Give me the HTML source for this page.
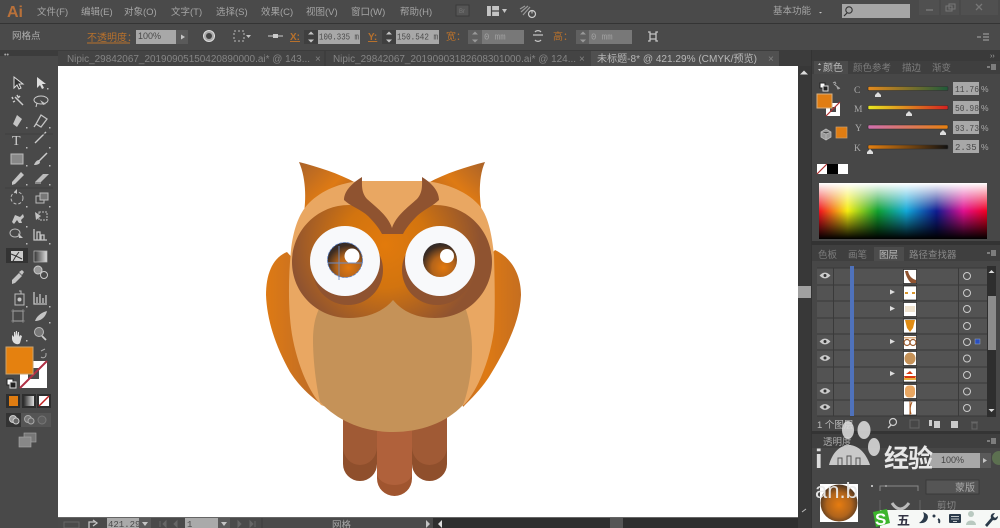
<!DOCTYPE html>
<html><head><meta charset="utf-8"><style>
html,body{margin:0;padding:0;background:#4a4a4a}
#w{position:relative;width:1000px;height:528px;overflow:hidden}
svg{position:absolute;left:0;top:0;filter:blur(.35px)}
text{font-family:"Liberation Sans","Noto Sans CJK SC",sans-serif;font-size:10px;fill:#a8a8a8}
.m{font-size:9.5px;fill:#a5a5a5}
.t{font-size:10px;fill:#858585}
.o{font-size:10px;fill:#b8712c}
.v{font-family:"Liberation Mono","Noto Sans CJK SC",monospace;font-size:9px;fill:#4a4a4a}
.ic{fill:none;stroke:#c4c4c4;stroke-width:1.3}
.f{fill:#c4c4c4}
#sp{position:absolute;left:819px;top:183px;width:168px;height:56px;background:linear-gradient(#fff,rgba(255,255,255,0) 50%,rgba(0,0,0,0) 50%,#000),linear-gradient(90deg,#f01020 0,#f5ee10 17%,#10a030 35%,#12a8d8 52%,#101c90 70%,#e01090 86%,#f00020 100%)}
</style></head><body><div id="w">
<svg width="1000" height="528" viewBox="0 0 1000 528">
<defs>
<linearGradient id="earL" x1="0" y1="0" x2="1" y2="1"><stop offset="0" stop-color="#a9622a"/><stop offset=".5" stop-color="#de7a14"/><stop offset="1" stop-color="#96562a"/></linearGradient>
<linearGradient id="earR" x1="1" y1="0" x2="0" y2="1"><stop offset="0" stop-color="#a9622a"/><stop offset=".45" stop-color="#de7a14"/><stop offset="1" stop-color="#a86028"/></linearGradient>
<linearGradient id="wL" x1="0" y1="0" x2="1" y2="0"><stop offset="0" stop-color="#de7a14"/><stop offset="1" stop-color="#b5682c"/></linearGradient>
<linearGradient id="wR" x1="1" y1="0" x2="0" y2="0"><stop offset="0" stop-color="#c56e20"/><stop offset=".5" stop-color="#de7a14"/><stop offset="1" stop-color="#b5682c"/></linearGradient>
<radialGradient id="mask" gradientUnits="userSpaceOnUse" cx="385" cy="245" r="95"><stop offset="0" stop-color="#e27a0c"/><stop offset=".45" stop-color="#d2740f"/><stop offset="1" stop-color="#8f5330"/></radialGradient>
<radialGradient id="pup" cx=".6" cy=".72" r=".75"><stop offset="0" stop-color="#e2780d"/><stop offset=".45" stop-color="#b4641a"/><stop offset=".85" stop-color="#3d2c22"/><stop offset="1" stop-color="#2f2a2a"/></radialGradient>
<radialGradient id="ball" cx=".5" cy=".55" r=".55"><stop offset="0" stop-color="#e67c10"/><stop offset=".6" stop-color="#b0641c"/><stop offset="1" stop-color="#4c3420"/></radialGradient>
<linearGradient id="sC" x1="0" x2="1"><stop offset="0" stop-color="#e58a1c"/><stop offset="1" stop-color="#1f5a3a"/></linearGradient>
<linearGradient id="sM" x1="0" x2="1"><stop offset="0" stop-color="#e8e820"/><stop offset="1" stop-color="#d42020"/></linearGradient>
<linearGradient id="sY" x1="0" x2="1"><stop offset="0" stop-color="#d070b0"/><stop offset="1" stop-color="#e58010"/></linearGradient>
<linearGradient id="sK" x1="0" x2="1"><stop offset="0" stop-color="#e58010"/><stop offset="1" stop-color="#111"/></linearGradient>
<linearGradient id="grd" x1="0" x2="1"><stop offset="0" stop-color="#333"/><stop offset="1" stop-color="#ddd"/></linearGradient>
</defs>

<!-- base -->
<rect width="1000" height="528" fill="#4a4a4a"/>
<rect y="23" width="1000" height="1" fill="#343434"/>
<rect y="50" width="1000" height="16" fill="#3c3c3c"/>
<rect y="56" width="58" height="472" fill="#494949"/>
<text x="4" y="57" style="font-size:7px">••</text>

<!-- menu -->
<text x="7" y="17" style="font-size:16px;font-weight:bold;fill:#b9713a">Ai</text>
<text class="m" x="37" y="15">文件(F)</text>
<text class="m" x="81" y="15">编辑(E)</text>
<text class="m" x="124" y="15">对象(O)</text>
<text class="m" x="171" y="15">文字(T)</text>
<text class="m" x="216" y="15">选择(S)</text>
<text class="m" x="261" y="15">效果(C)</text>
<text class="m" x="306" y="15">视图(V)</text>
<text class="m" x="351" y="15">窗口(W)</text>
<text class="m" x="400" y="15">帮助(H)</text>
<rect x="456" y="5" width="13" height="11" fill="#555" stroke="#3a3a3a"/>
<text x="459" y="13" style="font-size:6px;fill:#777">Br</text>
<rect x="487" y="6" width="12" height="10" fill="#c4c4c4"/><path d="M491.5 6v10M491.5 11H499" stroke="#444" stroke-width="1.2"/>
<path d="M502 9h5l-2.500 4z" class="f"/>
<path d="M521 12l7-6M523 15l7-8M520 9l5-3" stroke="#999" stroke-width="1.200" fill="none"/>
<circle cx="532" cy="14" r="3.500" fill="none" stroke="#ccc" stroke-width="1.200"/><path d="M532 10.500v3" stroke="#ccc"/>
<text class="m" x="773" y="14">基本功能</text>
<path d="M819 12h3l-1.500 1.500z" class="f"/>
<rect x="842" y="4" width="68" height="14" fill="#a6a6a6"/>
<circle cx="849" cy="10" r="3.200" fill="none" stroke="#333" stroke-width="1.100"/><path d="M847 13l-3 3" stroke="#333" stroke-width="1.200"/>
<rect x="919" y="0" width="79" height="15" fill="#505050"/>
<path d="M926 10h7" stroke="#777" stroke-width="1.500"/>
<rect x="946" y="6" width="6" height="5" fill="none" stroke="#777"/><rect x="949" y="4" width="6" height="5" fill="none" stroke="#777"/>
<path d="M976 4l6 6M982 4l-6 6" stroke="#777" stroke-width="1.300"/>
<path d="M940 0v15M960 0v15" stroke="#444"/>

<!-- control bar -->
<text x="12" y="39" style="font-size:9.500px;fill:#b0b0b0">网格点</text>
<text class="o" x="87" y="41">不透明度：</text>
<path d="M87 43h43" stroke="#b8712c"/>
<rect x="136" y="30" width="40" height="14" fill="#a8a8a8"/>
<text class="v" x="138" y="39" style="font-family:'Liberation Sans',sans-serif">100%</text>
<rect x="176" y="30" width="12" height="14" fill="#5a5a5a"/><path d="M181 34.500l4 2.500-4 2.500z" class="f"/>
<circle cx="209" cy="36" r="5.500" fill="#aaa" stroke="#ddd"/><circle cx="209" cy="36" r="3" fill="#444"/>
<rect x="234" y="31" width="10" height="10" fill="none" stroke="#bbb" stroke-dasharray="2 2"/>
<path d="M246 35h5l-2.500 3z" class="f"/>
<path d="M268 36h15" stroke="#ccc"/><rect x="273" y="34" width="5" height="4" fill="#ccc"/>
<text class="o" x="290" y="40" style="font-weight:bold;text-decoration:underline">X:</text>
<rect x="304" y="30" width="14" height="14" fill="#3f3f3f"/>
<path d="M308 34.500h6l-3-3zM308 39.500h6l-3 3z" class="f"/>
<rect x="318" y="30" width="42" height="14" fill="#a8a8a8"/>
<text class="v" x="319" y="39.500" textLength="40" lengthAdjust="spacingAndGlyphs">100.335 m</text>
<text class="o" x="368" y="40" style="font-weight:bold;text-decoration:underline">Y:</text>
<rect x="382" y="30" width="14" height="14" fill="#3f3f3f"/>
<path d="M386 34.500h6l-3-3zM386 39.500h6l-3 3z" class="f"/>
<rect x="396" y="30" width="43" height="14" fill="#a8a8a8"/>
<text class="v" x="397" y="39.500" textLength="41" lengthAdjust="spacingAndGlyphs">150.542 m</text>
<text class="o" x="446" y="40">宽：</text>
<rect x="468" y="30" width="14" height="14" fill="#606060"/>
<path d="M472 34.500h6l-3-3zM472 39.500h6l-3 3z" fill="#999"/>
<rect x="482" y="30" width="42" height="14" fill="#787878"/>
<text class="v" x="484" y="39.500" style="fill:#a0a0a0">0 mm</text>
<path d="M533 35h10M535 32a4 4 0 0 1 6 0M535 40a4 4 0 0 0 6 0" class="ic"/>
<text class="o" x="553" y="40">高：</text>
<rect x="576" y="30" width="13" height="14" fill="#606060"/>
<path d="M580 34.500h6l-3-3zM580 39.500h6l-3 3z" fill="#999"/>
<rect x="589" y="30" width="43" height="14" fill="#787878"/>
<text class="v" x="591" y="39.500" style="fill:#a0a0a0">0 mm</text>
<path d="M648 32h2v2M658 32h-2v2M648 41h2v-2M658 41h-2v-2M650 34h6v5h-6z" class="ic"/>
<path d="M977 37h4M983 34h6M983 37h6M983 40h6" stroke="#aaa"/>

<!-- tabs -->
<rect x="58" y="51" width="533" height="15" fill="#444"/>
<rect x="591" y="51" width="188" height="15" fill="#505050"/>
<path d="M325 51v15" stroke="#393939"/>
<text class="t" x="67" y="62" textLength="243" lengthAdjust="spacingAndGlyphs">Nipic_29842067_20190905150420890000.ai* @ 143...</text>
<text class="t" x="315" y="62">×</text>
<text class="t" x="333" y="62" textLength="243" lengthAdjust="spacingAndGlyphs">Nipic_29842067_20190903182608301000.ai* @ 124...</text>
<text class="t" x="579" y="62">×</text>
<text class="t" x="597" y="62" style="fill:#b8b8b8" textLength="160" lengthAdjust="spacingAndGlyphs">未标题-8* @ 421.29% (CMYK/预览)</text>
<text class="t" x="768" y="62">×</text>

<!-- canvas -->
<rect x="58" y="66" width="740" height="451" fill="#fff"/>

<!-- owl legs (behind body) -->
<path d="M343 415V464A17 17 0 0 0 377 464V415Z" fill="#8f4f2c"/>
<path d="M343 415V447A17 18 0 0 0 377 447V415Z" fill="#a05a35"/>
<path d="M412 415V464A17.500 17 0 0 0 447 464V415Z" fill="#8f4f2c"/>
<path d="M412 415V447A17.500 18 0 0 0 447 447V415Z" fill="#a05a35"/>
<path d="M377 415V478.500A17.500 17.500 0 0 0 412 478.500V415Z" fill="#a0552f"/>
<path d="M377 415V473A17.500 12 0 0 0 412 473V415Z" fill="#b0613b"/>

<!-- owl -->
<path d="M299 162C318 167 338 173 356 183L317 200 303 218C306 205 307 180 299 162Z" fill="url(#earL)"/>
<path d="M485 162C466 167 446 173 428 183L467 200 483 218C480 205 477 180 485 162Z" fill="url(#earR)"/>
<path d="M287 252C272 258 266 275 266 295 267 320 275 345 290 372 299 386 310 396 322 405L330 300Z" fill="url(#wL)"/>
<path d="M495 250C512 258 521 275 521 295 520 318 510 342 492 372 484 386 474 396 463 407L450 300Z" fill="url(#wR)"/>
<path d="M360 181H423C442 182 465 190 478 204 488 214 492 235 494 255 495 290 495 310 494 330 490 360 478 390 464 405L393 432 321 405C308 390 298 365 293 340 288 315 288 280 291 250 293 232 298 214 309 203 322 190 340 183 360 181Z" fill="#e9a762"/>
<path d="M313 340C313 325 316 310 325 300H462C468 312 472 330 472 350 472 372 468 392 463 405 446 423 420 432 393 432 366 432 340 423 320 402 316 385 313 360 313 340Z" fill="#c59258"/>
<path d="M393 300C383 312 367 318 349 318 317 318 292 293 292 262 292 231 317 205 349 205 367 205 383 216 393 232 403 216 417 205 435 205 467 205 492 231 492 262 492 293 467 318 435 318 417 318 403 312 393 300Z" fill="url(#mask)"/>
<circle cx="348" cy="270" r="35" fill="#8f5330"/>
<circle cx="437" cy="270" r="35" fill="#8f5330"/>
<path d="M362 177C354 182 344 190 344 200 350 206 362 210 368 216 374 222 379 228 382 234H403C406 228 411 222 417 216 423 210 433 206 439 200 439 190 430 182 422 177 422 185 423 192 417 199 407 208 396 216 392 228 388 216 377 208 367 199 361 192 362 185 362 177Z" fill="#8f5330"/>
<circle cx="345" cy="261" r="35" fill="#f8f9fb"/>
<circle cx="440" cy="261" r="35" fill="#f8f9fb"/>
<circle cx="345" cy="260" r="17.500" fill="url(#pup)"/>
<circle cx="440" cy="260" r="17" fill="url(#pup)"/>
<circle cx="352" cy="256" r="7.500" fill="#fff"/>
<circle cx="447" cy="256" r="7" fill="#fff"/>
<circle cx="345" cy="260" r="17.500" fill="none" stroke="#5a7ec0" stroke-width=".8" stroke-dasharray="3 1"/>
<path d="M328 263H363M339 246V280" stroke="#6a8cc8" stroke-width=".9" fill="none"/>

<!-- status bar -->
<rect x="58" y="517" width="740" height="11" fill="#4a4a4a"/>
<rect x="58" y="517" width="740" height="1" fill="#666"/>
<rect x="433" y="518" width="365" height="10" fill="#2e2e2e"/>
<rect x="610" y="518" width="13" height="10" fill="#555"/>
<rect x="64" y="522" width="15" height="6" fill="none" stroke="#666"/>
<path d="M89 528v-6h6M93 520l4 3-4 3" class="ic"/>
<rect x="107" y="518" width="32" height="10" fill="#aaa"/>
<text class="v" x="108" y="527">421.29</text>
<rect x="139" y="518" width="12" height="10" fill="#5a5a5a"/><path d="M142 522h6l-3 4z" class="f"/>
<path d="M160 521v6M163 524l3-3v6zM174 524l3-3v6z" fill="#666" stroke="#666"/>
<rect x="185" y="518" width="33" height="10" fill="#aaa"/>
<text class="v" x="187" y="527">1</text>
<rect x="218" y="518" width="12" height="10" fill="#5a5a5a"/><path d="M221 522h6l-3 4z" class="f"/>
<path d="M238 521l3 3-3 3zM250 521l3 3-3 3zM255 521v6" fill="#666" stroke="#666"/>
<path d="M262 518v10" stroke="#3c3c3c"/>
<text x="332" y="528" style="font-size:9.500px;fill:#aaa">网格</text>
<path d="M426 520l4 4-4 4z" class="f"/>
<path d="M442 520l-4 4 4 4z" fill="#ddd"/>

<!-- right scrollbar -->
<rect x="798" y="66" width="14" height="462" fill="#383838"/>
<path d="M800 74.500l4-4 4 4z" fill="#ddd"/>
<rect x="798" y="286" width="13" height="12" fill="#a0a0a0"/>
<rect x="812" y="50" width="188" height="478" fill="#474747"/>
<rect x="811" y="50" width="1" height="478" fill="#333"/>
<rect x="812" y="50" width="188" height="11" fill="#3a3a3a"/>
<text x="990" y="58" style="font-size:7px;fill:#aaa">››</text>

<!-- color panel -->
<rect x="812" y="61" width="188" height="13" fill="#3f3f3f"/>
<rect x="814" y="61" width="34" height="13" fill="#4b4b4b"/>
<path d="M818 65l1.500-2 1.500 2zM818 69l1.500 2 1.500-2z" class="f"/>
<text x="823" y="71" style="font-size:10px;fill:#bbb">颜色</text>
<text x="853" y="71" style="font-size:9.500px;fill:#7d7d7d">颜色参考</text>
<text x="902" y="71" style="font-size:9.500px;fill:#7d7d7d">描边</text>
<text x="932" y="71" style="font-size:9.500px;fill:#7d7d7d">渐变</text>
<path d="M987 67h3M991 65h5M991 67h5M991 69h5" stroke="#bbb"/>
<rect x="820" y="83" width="5" height="5" fill="#fff" stroke="#222"/><rect x="823" y="86" width="5" height="5" fill="#222" stroke="#ddd"/>
<path d="M833 83l2-1 1 2M840 88l-2 1-1-2M834 84l5 4" fill="none" stroke="#aaa"/>
<rect x="826" y="103" width="14" height="13" fill="#fff"/>
<rect x="830" y="107" width="6" height="5" fill="#4a4a4a"/>
<path d="M826 116l14-14" stroke="#b03030" stroke-width="1.200"/>
<rect x="817" y="94" width="15" height="14" fill="#e07d12" stroke="#d8b080"/>
<path d="M826 129l5 3v5l-5 3-5-3v-5zM826 134v6M821 132l5 2 5-2" fill="#999" stroke="#bbb" stroke-width=".8"/>
<rect x="836" y="127" width="11" height="11" fill="#e07d12" stroke="#c9a070" stroke-width=".7"/>

<text x="854" y="93" style="font-size:9.500px;font-family:'Liberation Serif';fill:#aaa">C</text>
<text x="854" y="112" style="font-size:9.500px;font-family:'Liberation Serif';fill:#aaa">M</text>
<text x="855" y="131" style="font-size:9.500px;font-family:'Liberation Serif';fill:#aaa">Y</text>
<text x="854" y="151" style="font-size:9.500px;font-family:'Liberation Serif';fill:#aaa">K</text>
<rect x="868" y="86.500" width="80" height="4" rx="1" fill="url(#sC)" stroke="#2e2e2e" stroke-width=".6"/>
<rect x="868" y="105.500" width="80" height="4" rx="1" fill="url(#sM)" stroke="#2e2e2e" stroke-width=".6"/>
<rect x="868" y="125" width="80" height="4" rx="1" fill="url(#sY)" stroke="#2e2e2e" stroke-width=".6"/>
<rect x="868" y="145" width="80" height="4" rx="1" fill="url(#sK)" stroke="#2e2e2e" stroke-width=".6"/>
<path d="M875 95l3-3 3 3v2h-6zM906 114l3-3 3 3v2h-6zM940 133l3-3 3 3v2h-6zM867 152l3-3 3 3v2h-6z" fill="#ddd"/>
<rect x="953" y="82" width="26" height="13" fill="#a8a8a8"/>
<rect x="953" y="101" width="26" height="13" fill="#a8a8a8"/>
<rect x="953" y="121" width="26" height="13" fill="#a8a8a8"/>
<rect x="953" y="140" width="26" height="13" fill="#a8a8a8"/>
<text class="v" x="955" y="92" textLength="24" lengthAdjust="spacingAndGlyphs">11.76</text>
<text class="v" x="955" y="111" textLength="24" lengthAdjust="spacingAndGlyphs">50.98</text>
<text class="v" x="955" y="131" textLength="24" lengthAdjust="spacingAndGlyphs">93.73</text>
<text class="v" x="955" y="150">2.35</text>
<text x="981" y="92" style="font-size:8.500px;fill:#aaa">%</text>
<text x="981" y="111" style="font-size:8.500px;fill:#aaa">%</text>
<text x="981" y="131" style="font-size:8.500px;fill:#aaa">%</text>
<text x="981" y="150" style="font-size:8.500px;fill:#aaa">%</text>
<rect x="817" y="164" width="10" height="10" fill="#fff"/><path d="M817 174l10-10" stroke="#b03030" stroke-width="1.200"/>
<rect x="827" y="164" width="11" height="10" fill="#000"/>
<rect x="838" y="164" width="10" height="10" fill="#fff"/>
<rect x="812" y="241" width="188" height="4" fill="#333"/>

<!-- layers panel -->
<rect x="812" y="245" width="188" height="16" fill="#3f3f3f"/>
<rect x="874" y="247" width="30" height="14" fill="#4c4c4c"/>
<text x="818" y="258" style="font-size:9.500px;fill:#7d7d7d">色板</text>
<text x="848" y="258" style="font-size:9.500px;fill:#7d7d7d">画笔</text>
<text x="879" y="258" style="font-size:9.500px;fill:#bbb">图层</text>
<text x="909" y="258" style="font-size:9.500px;fill:#8a8a8a">路径查找器</text>
<path d="M987 253h3M991 251h5M991 253h5M991 255h5" stroke="#bbb"/>
<rect x="817" y="268" width="170" height="148" fill="#535353"/>
<g stroke="#3a3a3a" fill="none"><path d="M817 268H987M817 285H987M817 301H987M817 318H987M817 334H987M817 350H987M817 367H987M817 383H987M817 400H987M817 416H987"/><path d="M833.500 268V416M958.500 268V416"/></g>
<rect x="850" y="266" width="4" height="150" fill="#4f72bc"/>
<rect x="987" y="266" width="9" height="151" fill="#2e2e2e"/>
<rect x="988" y="296" width="8" height="54" fill="#8c8c8c"/>
<path d="M988.500 273l3-3 3 3zM988.500 409l3 3 3-3z" fill="#ddd"/>
<g fill="#ccc" stroke="#ccc" stroke-width=".6">
<path d="M820 275.500q5-5 10 0q-5 5-10 0z"/>
<path d="M820 341.500q5-5 10 0q-5 5-10 0zM820 358q5-5 10 0q-5 5-10 0zM820 391q5-5 10 0q-5 5-10 0zM820 407q5-5 10 0q-5 5-10 0z"/></g>
<g fill="#333"><circle cx="825" cy="275.500" r="1.500"/><circle cx="825" cy="341.500" r="1.500"/><circle cx="825" cy="358" r="1.500"/><circle cx="825" cy="391" r="1.500"/><circle cx="825" cy="407" r="1.500"/></g>
<path d="M890 289.500l5 2.500-5 2.500zM890 306l5 2.500-5 2.500zM890 339l5 2.500-5 2.500zM890 371l5 2.500-5 2.500z" fill="#ddd"/>
<g fill="#fff" stroke="#222" stroke-width=".7">
<rect x="903.500" y="269.500" width="13" height="14"/><rect x="903.500" y="286" width="13" height="14"/><rect x="903.500" y="302.500" width="13" height="14"/><rect x="903.500" y="319" width="13" height="14"/><rect x="903.500" y="335.500" width="13" height="14"/><rect x="903.500" y="351.500" width="13" height="14"/><rect x="903.500" y="368" width="13" height="14"/><rect x="903.500" y="384.500" width="13" height="14"/><rect x="903.500" y="401" width="13" height="14"/>
</g>
<path d="M905 271l3 0c1 5 4 8 8 9v3h-5c-3-3-5-7-6-12z" fill="#8f5330"/>
<path d="M905 292h3v2h-3zM912 292h3v2h-3z" fill="#d89830"/>
<path d="M905 306h10v6h-10z" fill="#f0e4d0"/>
<path d="M905 320h10l-2 8-3 4-3-4z" fill="#e08c14"/>
<circle cx="907" cy="342.500" r="3" fill="#fff" stroke="#9a5a2c" stroke-width="1.200"/><circle cx="913" cy="342.500" r="3" fill="#fff" stroke="#9a5a2c" stroke-width="1.200"/><path d="M904 337h12v1.500h-12z" fill="#e0b080"/>
<ellipse cx="910" cy="358.500" rx="5.500" ry="6" fill="#c59258"/>
<path d="M906 374l4-3 3 3zM904 376h12l-1 3h-10z" fill="#d8380f"/><path d="M904 378h12v2h-12z" fill="#e8b040"/>
<rect x="905" y="385.500" width="10" height="12" rx="4" fill="#e9a762"/>
<path d="M910 401v14M912 402q-3 6-1 12" stroke="#a85a20" fill="none"/>
<g fill="none" stroke="#ccc" stroke-width="1"><circle cx="967" cy="276" r="3.500"/><circle cx="967" cy="293" r="3.500"/><circle cx="967" cy="309" r="3.500"/><circle cx="967" cy="326" r="3.500"/><circle cx="967" cy="342" r="3.500"/><circle cx="967" cy="358.500" r="3.500"/><circle cx="967" cy="375" r="3.500"/><circle cx="967" cy="391.500" r="3.500"/><circle cx="967" cy="408" r="3.500"/></g>
<rect x="975" y="339" width="5" height="5" fill="#2a4fc0" stroke="#9ab" stroke-width=".5"/>
<text x="817" y="428" style="font-size:9.500px;fill:#bbb">1 个图层</text>
<circle cx="893" cy="422" r="3.500" fill="none" stroke="#ccc" stroke-width="1.200"/><path d="M891 425l-3 3" stroke="#ccc" stroke-width="1.300"/>
<rect x="910" y="420" width="9" height="8" fill="none" stroke="#666"/>
<rect x="929" y="420" width="3" height="6" fill="#ccc"/><rect x="934" y="421" width="6" height="7" fill="#ccc"/>
<path d="M951 421h7v7h-7z" fill="#ccc"/>
<path d="M971 422h7M972 423h5v6h-5z" fill="none" stroke="#666"/>
<rect x="812" y="431" width="188" height="3" fill="#343434"/>

<!-- transparency panel -->
<rect x="812" y="434" width="188" height="14" fill="#3f3f3f"/>
<text x="823" y="445" style="font-size:9.500px;fill:#aaa">透明度</text>
<path d="M987 441h3M991 439h5M991 441h5M991 443h5" stroke="#bbb"/>
<rect x="930" y="453" width="50" height="15" fill="#a8a8a8"/>
<text x="941" y="463" style="font-size:9px;fill:#444">100%</text>
<rect x="980" y="453" width="11" height="15" fill="#5a5a5a"/><path d="M983 458l4 2.500-4 2.500z" class="f"/>
<circle cx="999" cy="458" r="7" fill="#5c7050"/>
<rect x="812" y="470" width="188" height="58" fill="#474747"/>
<rect x="820" y="484" width="38" height="38" fill="#fff"/>
<circle cx="839" cy="503" r="18.500" fill="url(#ball)"/>
<circle cx="872" cy="486" r="1" fill="#ddd"/><circle cx="886" cy="486" r="1" fill="#ddd"/>
<path d="M880 491v-5h38v5" fill="none" stroke="#888"/>
<rect x="926" y="480" width="53" height="14" fill="#555" stroke="#3a3a3a"/>
<text x="955" y="491" style="font-size:10px;fill:#aaa">蒙版</text>
<path d="M880 500v20M920 500v20" stroke="#666"/>
<path d="M892 503q8 12 17 0" fill="none" stroke="#bbb" stroke-width="3"/>
<text x="937" y="509" style="font-size:9.500px;fill:#888">剪切</text>
<path d="M802 512l4-3" stroke="#bbb"/>

<!-- watermark -->
<g fill="#dcdcdc" fill-opacity=".88">
<ellipse cx="848" cy="430" rx="6" ry="9"/>
<ellipse cx="864" cy="430" rx="6.500" ry="9"/>
<ellipse cx="874" cy="447" rx="6" ry="9"/>
<path d="M829 465c3-12 11-20 20-20 9 0 17 8 21 20z"/>
</g>
<path d="M838 465v-7h4v7M847 465v-9h4v9M856 465v-7h4v7" stroke="#555" fill="none"/>
<text x="815" y="468" style="font-size:27px;font-weight:bold;fill:#dcdcdc">i</text>
<text x="884" y="467" style="font-size:25px;font-weight:bold;fill:#e8e8e8;letter-spacing:-1px">经验</text>
<text x="815" y="498" style="font-size:22px;fill:#eaeaea;fill-opacity:.95">an.b</text>

<!-- IME bar -->
<rect x="880" y="510" width="120" height="18" fill="#f6f8f6"/>
<path d="M874 511l14-3 3 14-14 4z" fill="#3cb52c" transform="translate(-1 1)"/>
<text x="875" y="525" style="font-size:17px;font-weight:bold;fill:#fff">S</text>
<text x="897" y="525" style="font-size:13px;font-weight:bold;fill:#334">五</text>
<path d="M923 512q3 6-4 11q8 1 9-6q0-3-5-5z" fill="#2b3a4a"/>
<circle cx="934" cy="516" r="1.500" fill="#2b3a4a"/><path d="M938 519q2 1 1 4" stroke="#2b3a4a" stroke-width="2" fill="none"/>
<rect x="949" y="514" width="12" height="9" rx="1" fill="#2b3a4a"/><path d="M951 516.500h8M951 519h8M953 521.500h4" stroke="#f6f8f6" stroke-width=".8"/>
<circle cx="971" cy="514" r="3" fill="#b9c9c0"/><path d="M966 525c0-6 10-6 10 0z" fill="#b9c9c0"/>
<path d="M985 525l6-7c-1-3 1-5 4-5l-2 3 2 2 3-2c0 3-2 5-5 4l-6 7z" fill="#2b3a4a"/>

<!-- toolbar icons -->
<path d="M14 77l0 11 3-3 2 4 2-1-2-4 4 0z" fill="#333" stroke="#ddd"/>
<path d="M37 77l0 11 3-3 2 4 2-1-2-4 4 0z" fill="#ddd"/>
<path d="M15 97l8 8M12 97l1 2M17 95l1 2M13 102l2-1M20 96l-2 2" stroke="#ccc" stroke-width="1.500"/>
<ellipse cx="41" cy="100" rx="7" ry="4" fill="none" stroke="#ccc"/><path d="M40 100l6 4-3 1z" class="f"/><path d="M37 103l-1 4" stroke="#ccc"/>
<path d="M17 115l5 4-5 8-4-3zM13 124l-2 3" class="f"/>
<path d="M41 115l6 4-6 8-5-3zM36 124l-2 3" class="ic"/>
<text x="12" y="145" style="font-family:'Liberation Serif';font-size:14px;fill:#ccc">T</text>
<path d="M35 143l11-11" stroke="#ccc" stroke-width="1.300"/>
<rect x="11" y="154" width="12" height="10" fill="#888" stroke="#bbb"/>
<path d="M47 153l-8 8" stroke="#ccc" stroke-width="1.500"/><path d="M39 160c-2 0-4 2-5 5 3 0 6-1 6-3z" class="f"/>
<path d="M21 172l3 3-9 9-3 1 0-3z" class="f"/>
<path d="M35 182l8-8h6l-8 8z" fill="#bbb"/><path d="M35 182h6v2h-6z" fill="#888"/>
<circle cx="17" cy="198" r="6" fill="none" stroke="#bbb" stroke-dasharray="3 2"/><path d="M14 192l3-3v5z" class="f"/>
<rect x="36" y="196" width="8" height="7" fill="none" stroke="#bbb"/><rect x="40" y="193" width="8" height="7" fill="#777" stroke="#bbb"/>
<path d="M12 222l3-7 5 2 3-3 1 3-3 3 1 3-3 0-2-3-3 4z" class="f"/>
<path d="M35 212l6 4-5 4z" class="f"/><rect x="39" y="212" width="8" height="8" fill="none" stroke="#bbb" stroke-dasharray="2 1"/>
<ellipse cx="15" cy="233" rx="5" ry="4" fill="none" stroke="#bbb"/><path d="M18 233l5 5-4 0z" class="f"/>
<path d="M34 229v11h13M37 232h3v8h-3zM41 235h3v5h-3z" class="ic"/>
<rect x="6" y="248" width="22" height="15" fill="#333"/>
<rect x="11" y="251" width="12" height="10" fill="#ccc"/><path d="M11 254l5 2 3-4M13 261l3-5 6 3" stroke="#333" fill="none"/>
<rect x="34" y="251" width="13" height="11" fill="url(#grd)" stroke="#bbb" stroke-width=".7"/>
<path d="M12 280l7-7 3 3-7 7-3 1zM19 272l3-2 2 2-2 3z" class="f"/>
<circle cx="38" cy="270" r="4" fill="#999" stroke="#ccc"/><circle cx="44" cy="275" r="3.500" fill="none" stroke="#ccc"/>
<path d="M15 294h9v11h-9zM19 291h2v3" fill="none" stroke="#bbb"/><circle cx="19.500" cy="299.500" r="2" class="f"/>
<path d="M34 292v12h13M37 297v6M40 294v9M43 298v5M46 295v8" class="ic"/>
<rect x="13" y="311" width="10" height="10" fill="none" stroke="#aaa"/><path d="M11 311h14M11 321h14M13 309v14M23 309v14" stroke="#999" stroke-width=".6"/>
<path d="M35 321c2-6 8-9 12-10-1 5-5 10-12 10z" class="f"/>
<path d="M12 339v-4l2 2v-5l1 0v4l1-5 1 0v5l1-4 1 0v5l1-2 2 1-2 7c-1 2-7 2-8-4z" fill="#ddd"/>
<circle cx="39" cy="332" r="4.500" fill="#777" stroke="#bbb"/><path d="M42 336l4 4" stroke="#ccc" stroke-width="1.800"/>
<path d="M41 351l4-2M46 353v2a3 3 0 0 1-5 2" fill="none" stroke="#aaa"/>

<rect x="20" y="361" width="27" height="27" fill="#fff"/>
<rect x="28" y="368" width="11" height="11" fill="#4a4a4a"/>
<path d="M20 388L47 361" stroke="#b03045" stroke-width="2"/>
<rect x="6" y="347" width="27" height="27" fill="#e5810f" stroke="#c9a26e"/>
<rect x="7" y="379" width="6" height="6" fill="#fff" stroke="#222"/><rect x="10" y="382" width="6" height="6" fill="#222" stroke="#ddd"/>

<rect x="6" y="394" width="14" height="14" fill="#2e2e2e"/><rect x="9" y="396" width="9" height="10" fill="#e07d12"/>
<rect x="22" y="394" width="14" height="14" fill="#2e2e2e"/><rect x="24" y="396" width="10" height="10" fill="url(#grd)"/>
<rect x="37" y="394" width="14" height="14" fill="#2e2e2e"/><rect x="39" y="396" width="10" height="10" fill="#fff"/><path d="M39 406l10-10" stroke="#c02020" stroke-width="1.500"/>
<rect x="6" y="413" width="15" height="14" fill="#333"/><rect x="21" y="413" width="30" height="14" fill="#555"/>
<circle cx="13" cy="419" r="3.500" fill="#999" stroke="#ccc"/><circle cx="16" cy="421" r="3" fill="#666" stroke="#ccc"/>
<circle cx="28" cy="419" r="3.500" fill="#777" stroke="#aaa"/><circle cx="31" cy="421" r="3" fill="#666" stroke="#aaa"/>
<circle cx="42" cy="420" r="4" fill="#5e5e5e" stroke="#777"/>
<rect x="24" y="433" width="12" height="9" fill="#777" stroke="#aaa" stroke-width=".6"/><rect x="19" y="437" width="12" height="10" fill="#888" stroke="#aaa" stroke-width=".6"/>
<g fill="#bbb"><rect x="47" y="88" width="1.500" height="1.500"/><rect x="26" y="127" width="1.500" height="1.500"/><rect x="49" y="127" width="1.500" height="1.500"/><rect x="26" y="147" width="1.500" height="1.500"/><rect x="49" y="147" width="1.500" height="1.500"/><rect x="26" y="165" width="1.500" height="1.500"/><rect x="49" y="165" width="1.500" height="1.500"/><rect x="26" y="184" width="1.500" height="1.500"/><rect x="49" y="184" width="1.500" height="1.500"/><rect x="26" y="206" width="1.500" height="1.500"/><rect x="49" y="206" width="1.500" height="1.500"/><rect x="26" y="226" width="1.500" height="1.500"/><rect x="26" y="243" width="1.500" height="1.500"/><rect x="49" y="243" width="1.500" height="1.500"/><rect x="26" y="306" width="1.500" height="1.500"/><rect x="49" y="306" width="1.500" height="1.500"/><rect x="49" y="322" width="1.500" height="1.500"/><rect x="26" y="340" width="1.500" height="1.500"/></g>
<path d="M5 134H53M5 188H53" stroke="#404040" fill="none"/>
</svg>
<div id="sp"></div>
</div></body></html>
